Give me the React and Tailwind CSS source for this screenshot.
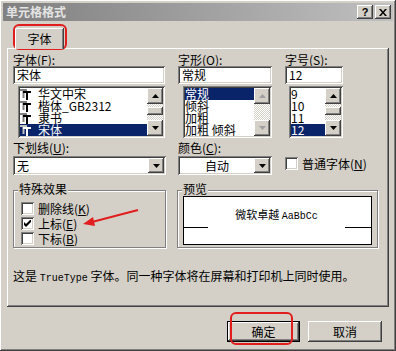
import React from 'react'

const raised = 'shadow-[inset_-1px_-1px_0_#404040,inset_1px_1px_0_#ffffff,inset_-2px_-2px_0_#808080,inset_2px_2px_0_#d4d0c8]'
const sunken = 'shadow-[inset_1px_1px_0_#808080,inset_-1px_-1px_0_#ffffff,inset_2px_2px_0_#404040,inset_-2px_-2px_0_#d4d0c8]'
const checker = 'bg-[repeating-conic-gradient(#d4d0c8_0_25%,#ffffff_0_50%)] bg-[length:2px_2px]'

function Arrow({ dir = 'down', disabled }) {
  return (
    <svg width="7" height="4" viewBox="0 0 7 4">
      <path d={dir === 'up' ? 'M3.5 0L7 4H0z' : 'M0 0h7L3.5 4z'} fill={disabled ? '#a0a0a0' : '#000'} />
    </svg>
  )
}

function ScrollBtn({ dir, disabled }) {
  return (
    <div className={`w-[16px] h-[16px] shrink-0 bg-[#d4d0c8] flex items-center justify-center ${raised}`}>
      <Arrow dir={dir} disabled={disabled} />
    </div>
  )
}

function Scrollbar({ thumb, disabled }) {
  return (
    <div className="w-[16px] h-full flex flex-col shrink-0">
      <ScrollBtn dir="up" disabled={disabled} />
      <div className={`flex-1 ${checker} flex flex-col`}>
        {thumb && <div className={`mt-[3px] h-[8px] bg-[#d4d0c8] ${raised}`} />}
      </div>
      <ScrollBtn dir="down" disabled={disabled} />
    </div>
  )
}

function TTIcon({ light }) {
  return (
    <svg width="12" height="12" viewBox="0 0 12 12" className="shrink-0">
      <path d="M0 1h7v2H4.5v7h-2V3H0z" fill={light ? '#c0c0c0' : '#808080'} />
      <path d="M3 3h8v2H8v7H6V5H3z" fill={light ? '#ffffff' : '#000'} />
    </svg>
  )
}

function ListBox({ items, selected, icon, thumb, disabled, className = '' }) {
  return (
    <div className={`h-[52px] bg-white p-[2px] flex ${sunken} ${className}`}>
      <div className="flex-1 min-w-0 flex flex-col">
        {items.map((it, i) => (
          <div
            key={it}
            className={`h-[12px] leading-[12px] flex items-center gap-[6px] whitespace-nowrap ${i === selected ? 'bg-[#0a246a] text-white' : ''}`}
          >
            {icon && <TTIcon light={i === selected} />}
            <span>{it}</span>
          </div>
        ))}
      </div>
      <Scrollbar thumb={thumb} disabled={disabled} />
    </div>
  )
}

function TextBox({ value }) {
  return (
    <div className={`h-[18px] bg-white px-[4px] leading-[18px] ${sunken}`}>{value}</div>
  )
}

function Combo({ value, center, className = '' }) {
  return (
    <div className={`h-[19px] bg-white p-[2px] flex ${sunken} ${className}`}>
      <div className={`flex-1 leading-[15px] px-[2px] ${center ? 'text-center' : ''}`}>{value}</div>
      <div className={`w-[16px] h-[15px] bg-[#d4d0c8] flex items-center justify-center ${raised}`}>
        <Arrow />
      </div>
    </div>
  )
}

function CheckBox({ checked }) {
  return (
    <div className={`w-[13px] h-[13px] bg-white shrink-0 flex items-center justify-center ${sunken}`}>
      {checked && (
        <svg width="7" height="7" viewBox="0 0 7 7">
          <path d="M0 2v3l2 2 5-5V-1L2 4z" fill="#000" />
        </svg>
      )}
    </div>
  )
}

function Label({ text, k }) {
  return (
    <div className="h-[12px] leading-[12px] whitespace-nowrap">
      {text}(<u>{k}</u>):
    </div>
  )
}

function GroupBox({ title, className = '', children }) {
  return (
    <div className={`relative pt-[5px] ${className}`}>
      <div className="h-full border border-[#808080] shadow-[1px_1px_0_#ffffff,inset_1px_1px_0_#ffffff]">
        {children}
      </div>
      <div className="absolute left-[5px] top-[-2px] px-[1px] bg-[#d4d0c8] leading-[12px]">{title}</div>
    </div>
  )
}

export default function App() {
  return (
    <div className={`w-[396px] h-[351px] bg-[#d4d0c8] p-[3px] text-[12px] text-black font-['Noto_Sans_CJK_SC',sans-serif] relative overflow-hidden ${raised}`}>
      {/* title bar */}
      <div className="h-[18px] bg-gradient-to-r from-[#808080] to-[#c0c0c0] flex items-center pl-[3px] pr-[2px]">
        <span className="flex-1 font-bold text-[#e4e4e4] leading-[14px]">单元格格式</span>
        <div className="flex gap-[2px]">
          <div className={`w-[16px] h-[14px] bg-[#d4d0c8] flex items-center justify-center font-bold text-[11px] leading-[11px] font-['Liberation_Sans',sans-serif] ${raised}`}>?</div>
          <div className={`w-[16px] h-[14px] bg-[#d4d0c8] flex items-center justify-center ${raised}`}>
            <svg width="8" height="7" viewBox="0 0 8 7">
              <path d="M0 0h2l2 2.5L6 0h2L5 3.5 8 7H6L4 4.5 2 7H0l3-3.5z" fill="#000" />
            </svg>
          </div>
        </div>
      </div>

      {/* tab strip */}
      <div className="mt-[7px] pl-[12px] flex">
        <div className="relative z-10 w-[48px] h-[21px] mb-[-1px] bg-[#d4d0c8] border-l border-t border-white rounded-tl-[2px] shadow-[inset_-1px_0_0_#808080,1px_0_0_#404040] flex items-center justify-center leading-[12px]">
          字体
        </div>
      </div>

      {/* tab page */}
      <div className={`mx-[4px] h-[259px] pt-[6px] pl-[6px] pr-[8px] ${raised}`}>
        {/* row 1 */}
        <div className="flex gap-[13px]">
          <div className="w-[152px] flex flex-col">
            <Label text="字体" k="F" />
            <TextBox value="宋体" />
            <ListBox className="mt-[2px] ml-[5px]" items={['华文中宋', '楷体_GB2312', '隶书', '宋体']} selected={3} icon thumb />
          </div>
          <div className="w-[94px] flex flex-col">
            <Label text="字形" k="O" />
            <TextBox value="常规" />
            <ListBox className="mt-[2px] ml-[5px]" items={['常规', '倾斜', '加粗', '加粗  倾斜']} selected={0} disabled />
          </div>
          <div className="w-[58px] flex flex-col">
            <Label text="字号" k="S" />
            <TextBox value="12" />
            <ListBox className="mt-[2px] ml-[4px]" items={['9', '10', '11', '12']} selected={3} thumb />
          </div>
        </div>

        {/* row 2 */}
        <div className="mt-[4px] flex gap-[12px]">
          <div className="w-[153px] flex flex-col gap-[2px]">
            <Label text="下划线" k="U" />
            <Combo value="无" />
          </div>
          <div className="w-[94px] flex flex-col gap-[2px]">
            <Label text="颜色" k="C" />
            <Combo value="自动" center />
          </div>
          <div className="pt-[15px] ml-[1px] flex items-start gap-[4px]">
            <CheckBox />
            <span className="leading-[13px] whitespace-nowrap">普通字体(<u>N</u>)</span>
          </div>
        </div>

        {/* row 3 */}
        <div className="mt-[10px] flex gap-[11px]">
          <GroupBox title="特殊效果" className="w-[153px] h-[63px]">
            <div className="pt-[11px] pl-[7px] flex flex-col gap-[2px]">
              {[['删除线', 'K', false], ['上标', 'E', true], ['下标', 'B', false]].map(([t, k, c]) => (
                <div key={t} className="flex items-center gap-[4px] h-[13px]">
                  <CheckBox checked={c} />
                  <span className="leading-[13px]">{t}(<u>{k}</u>)</span>
                </div>
              ))}
            </div>
          </GroupBox>
          <GroupBox title="预览" className="w-[201px] h-[63px]">
            <div className="mt-[5px] mx-[5px] h-[49px] bg-white border border-black flex items-end pb-[16px]">
              <div className="w-[24px] h-px bg-black" />
              <div className="flex-1 self-end mb-[5px] text-center text-[11px] leading-[12px] whitespace-nowrap">
                微软卓越 <span className="font-['Liberation_Mono',monospace] text-[10px]">AaBbCc</span>
              </div>
              <div className="w-[26px] h-px bg-black" />
            </div>
          </GroupBox>
        </div>

        <div className="mt-[22px] leading-[12px] whitespace-nowrap">
          这是 <span className="font-['Liberation_Mono',monospace] text-[10px]">TrueType</span> 字体。同一种字体将在屏幕和打印机上同时使用。
        </div>
      </div>

      {/* buttons */}
      <div className="mt-[14px] pr-[11px] flex justify-end gap-[8px]">
        <div className="w-[73px] h-[21px] border border-black">
          <div className={`h-full bg-[#d4d0c8] flex items-center justify-center leading-[12px] ${raised}`}>确定</div>
        </div>
        <div className={`w-[74px] h-[21px] bg-[#d4d0c8] flex items-center justify-center leading-[12px] ${raised}`}>取消</div>
      </div>

      {/* red annotations */}
      <div className="absolute left-[13px] top-[24px] w-[54px] h-[26px] border-2 border-[#e11d1d] rounded-[6px]" />
      <div className="absolute left-[230px] top-[312px] w-[63px] h-[33px] border-2 border-[#e11d1d] rounded-[6px]" />
      <svg className="absolute left-[80px] top-[204px]" width="64" height="26" viewBox="0 0 64 26">
        <path d="M58 6L12 18" stroke="#e11d1d" strokeWidth="2" fill="none" />
        <path d="M3 20L13 13L15 22z" fill="#e11d1d" />
      </svg>
    </div>
  )
}
